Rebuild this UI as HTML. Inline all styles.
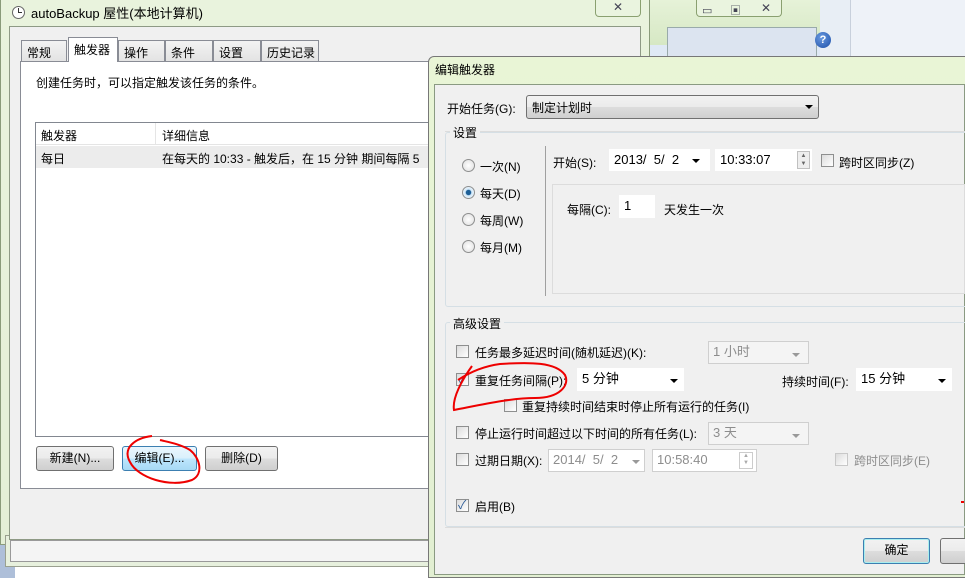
<!DOCTYPE html>
<html><head><meta charset="utf-8"><style>
*{box-sizing:border-box;margin:0;padding:0}
body{width:965px;height:578px;overflow:hidden;position:relative;background:#fff;font-family:"Liberation Sans","Noto Sans CJK SC",sans-serif;font-size:12px;color:#000}
.a{position:absolute;white-space:nowrap}
.btn{position:absolute;border:1px solid #707070;border-radius:3px;background:linear-gradient(#f2f2f2,#ebebeb 50%,#dddddd 51%,#cfcfcf);text-align:center;line-height:22px}
.cb{position:absolute;width:13px;height:13px;border:1px solid #8e8f8f;background:linear-gradient(135deg,#dcdcdc,#fff)}
.rd{position:absolute;width:13px;height:13px;border:1px solid #8e8f8f;border-radius:50%;background:radial-gradient(#fff,#ddd)}
.in{position:absolute;background:#fff;border:1px solid #abadb3;padding-left:4px;line-height:20px;font-size:13px;white-space:nowrap}
.dis{background:#f4f4f4;border-color:#cfcfcf;color:#8d8d8d}
.grp{position:absolute;border:1px solid #d5dfe5;border-radius:3px}
.arr{position:absolute;width:0;height:0;border-left:4px solid transparent;border-right:4px solid transparent;border-top:4px solid #000}
.g{color:#8d8d8d}
.tab{position:absolute;top:40px;height:22px;background:linear-gradient(#f3f3f3,#e3e3e3);border:1px solid #898c95;padding:3px 0 0 5px;font-size:12px;white-space:nowrap;overflow:hidden}
</style></head><body>
<div class="a" style="left:640px;top:0;width:325px;height:56px;background:#dfe9f5"></div>
<div class="a" style="left:650px;top:0;width:320px;height:45px;background:linear-gradient(#e6f2d8,#d6e8c4)"></div>
<div class="a" style="left:667px;top:27px;width:150px;height:30px;background:#dce4f0;border:1px solid #9aa"></div>
<div class="a" style="left:820px;top:0;width:30px;height:56px;background:#e8eef5"></div>
<div class="a" style="left:850px;top:0;width:115px;height:56px;background:#eef2f8;border-left:1px solid #c8d0dc"></div>
<div class="a" style="left:815px;top:32px;width:16px;height:16px;border-radius:50%;background:radial-gradient(circle at 40% 35%,#6a9ae0,#1c4fa8);color:#fff;font-weight:bold;font-size:11px;text-align:center;line-height:16px">?</div>
<div class="a" style="left:696px;top:0;width:86px;height:17px;border:1px solid #8aa070;border-top:none;border-radius:0 0 4px 4px;background:#eaf4df"></div>
<div class="a" style="left:702px;top:4px;font-size:11px;color:#445">▭</div>
<div class="a" style="left:730px;top:2px;font-size:11px;color:#445">▣</div>
<div class="a" style="left:761px;top:1px;font-size:12px;color:#445">✕</div>
<div class="a" style="left:0;top:540px;width:15px;height:38px;background:#aebfd9"></div>
<div class="a" style="left:0;top:0;width:650px;height:545px;background:linear-gradient(#e9f3dd,#e4efd6);border:1px solid #8a9b7a;border-top:none"></div>
<div class="a" style="left:5px;top:535px;width:640px;height:32px;background:#e7f0dd;border:1px solid #9aa08f"></div>
<div class="a" style="left:10px;top:540px;width:630px;height:22px;background:#f4f4f4;border:1px solid #999"></div>
<div class="a" style="left:595px;top:0;width:46px;height:17px;border:1px solid #8aa070;border-top:none;border-radius:0 0 4px 4px;background:#eaf4df;text-align:center;font-size:12px;color:#445">✕</div>
<div class="a" style="left:12px;top:6px;width:13px;height:13px;border:1px solid #666;border-radius:50%;background:#fff"></div>
<div class="a" style="left:18px;top:8px;width:1px;height:5px;background:#333"></div>
<div class="a" style="left:18px;top:12px;width:4px;height:1px;background:#333"></div>
<div class="a" style="left:31px;top:3px;font-size:13px">autoBackup 屋性(本地计算机)</div>
<div class="a" style="left:9px;top:26px;width:632px;height:514px;background:#f0f0f0;border:1px solid #8e9a85"></div>
<div class="a" style="left:20px;top:61px;width:620px;height:428px;background:#fff;border:1px solid #898c95"></div>
<div class="tab" style="left:21px;width:46px">常规</div>
<div class="a" style="left:68px;top:37px;width:50px;height:25px;background:#fff;border:1px solid #898c95;border-bottom:none;padding:3px 0 0 5px;font-size:12px">触发器</div>
<div class="tab" style="left:118px;width:47px">操作</div>
<div class="tab" style="left:165px;width:48px">条件</div>
<div class="tab" style="left:213px;width:48px">设置</div>
<div class="tab" style="left:261px;width:58px">历史记录</div>
<div class="a" style="left:36px;top:74px;font-size:12px">创建任务时，可以指定触发该任务的条件。</div>
<div class="a" style="left:35px;top:122px;width:400px;height:315px;border:1px solid #828790;background:#fff"></div>
<div class="a" style="left:36px;top:123px;width:400px;height:22px;border-bottom:1px solid #e5e5e5"></div>
<div class="a" style="left:155px;top:123px;width:1px;height:22px;background:#e5e5e5"></div>
<div class="a" style="left:41px;top:127px">触发器</div>
<div class="a" style="left:162px;top:127px">详细信息</div>
<div class="a" style="left:36px;top:146px;width:400px;height:22px;background:#ececec"></div>
<div class="a" style="left:41px;top:150px">每日</div>
<div class="a" style="left:162px;top:150px">在每天的 10:33 - 触发后，在 15 分钟 期间每隔 5</div>
<div class="btn" style="left:36px;top:446px;width:78px;height:25px">新建(N)...</div>
<div class="btn" style="left:122px;top:446px;width:75px;height:25px;border-color:#3c7fb1;background:linear-gradient(#eaf6fd,#d9f0fc 50%,#bee6fd 51%,#a7d9f5)">编辑(E)...</div>
<div class="btn" style="left:205px;top:446px;width:73px;height:25px">删除(D)</div>
<div class="a" style="left:428px;top:56px;width:540px;height:522px;background:linear-gradient(#e9f5d6,#e2efd2);border:1px solid #777;border-radius:6px 0 0 0"></div>
<div class="a" style="left:435px;top:61px;font-size:12px">编辑触发器</div>
<div class="a" style="left:434px;top:84px;width:531px;height:491px;background:#f0f0f0;border:1px solid #8a9a82"></div>
<div class="a" style="left:447px;top:100px">开始任务(G):</div>
<div class="a" style="left:526px;top:95px;width:293px;height:24px;border:1px solid #707070;border-radius:3px;background:linear-gradient(#f2f2f2,#ebebeb 50%,#ddd 51%,#cfcfcf);padding:3px 0 0 5px">制定计划时</div>
<div class="arr" style="left:805px;top:105px"></div>
<div class="a" style="left:445px;top:131px;width:520px;height:1px;background:#dcdcdc"></div>
<div class="grp" style="left:445px;top:132px;width:525px;height:175px"></div>
<div class="a" style="left:450px;top:124px;background:#f0f0f0;padding:0 3px">设置</div>
<div class="rd" style="left:462px;top:159px"></div><div class="a" style="left:480px;top:158px">一次(N)</div>
<div class="rd" style="left:462px;top:186px;background:radial-gradient(#1c5e96 30%,#cfe6f7 40%,#fff)"></div><div class="a" style="left:480px;top:185px">每天(D)</div>
<div class="rd" style="left:462px;top:213px"></div><div class="a" style="left:480px;top:212px">每周(W)</div>
<div class="rd" style="left:462px;top:240px"></div><div class="a" style="left:480px;top:239px">每月(M)</div>
<div class="a" style="left:545px;top:146px;width:1px;height:150px;background:#a0a0a0"></div>
<div class="a" style="left:553px;top:154px">开始(S):</div>
<div class="in" style="left:609px;top:149px;width:101px;height:22px;border-color:#fff">2013/&nbsp; 5/&nbsp; 2</div>
<div class="arr" style="left:692px;top:159px"></div>
<div class="in" style="left:715px;top:149px;width:97px;height:22px;border-color:#fff">10:33:07</div>
<div class="a" style="left:797px;top:151px;width:13px;height:18px;border:1px solid #c0c0c0;background:#eee;font-size:6px;text-align:center;line-height:8px;color:#666;white-space:normal">▲<br>▼</div>
<div class="cb" style="left:821px;top:154px"></div><div class="a" style="left:839px;top:154px">跨时区同步(Z)</div>
<div class="a" style="left:552px;top:184px;width:413px;height:110px;border:1px solid #dcdcdc"></div>
<div class="a" style="left:567px;top:201px">每隔(C):</div>
<div class="in" style="left:619px;top:195px;width:36px;height:23px;border-color:#fff">1</div>
<div class="a" style="left:664px;top:201px">天发生一次</div>
<div class="grp" style="left:445px;top:322px;width:525px;height:205px"></div>
<div class="a" style="left:450px;top:315px;background:#f0f0f0;padding:0 3px">高级设置</div>
<div class="cb" style="left:456px;top:345px"></div><div class="a" style="left:475px;top:344px">任务最多延迟时间(随机延迟)(K):</div>
<div class="in dis" style="left:708px;top:341px;width:101px;height:23px">1 小时</div><div class="arr" style="left:792px;top:353px;border-top-color:#999"></div>
<div class="cb" style="left:456px;top:373px"></div><div class="a" style="left:458px;top:370px;color:#2a5a96">✓</div><div class="a" style="left:475px;top:372px">重复任务间隔(P):</div>
<div class="in" style="left:577px;top:368px;width:107px;height:23px;border-color:#fff">5 分钟</div><div class="arr" style="left:670px;top:379px"></div>
<div class="a" style="left:782px;top:373px">持续时间(F):</div>
<div class="in" style="left:856px;top:368px;width:96px;height:23px;border-color:#fff">15 分钟</div><div class="arr" style="left:938px;top:379px"></div>
<div class="cb" style="left:504px;top:399px"></div><div class="a" style="left:522px;top:398px">重复持续时间结束时停止所有运行的任务(I)</div>
<div class="cb" style="left:456px;top:426px"></div><div class="a" style="left:475px;top:425px">停止运行时间超过以下时间的所有任务(L):</div>
<div class="in dis" style="left:708px;top:422px;width:101px;height:23px">3 天</div><div class="arr" style="left:792px;top:434px;border-top-color:#999"></div>
<div class="cb" style="left:456px;top:453px"></div><div class="a" style="left:475px;top:452px">过期日期(X):</div>
<div class="in dis" style="left:548px;top:449px;width:97px;height:23px;background:#fff">2014/&nbsp; 5/&nbsp; 2</div><div class="arr" style="left:632px;top:460px;border-top-color:#999"></div>
<div class="in dis" style="left:652px;top:449px;width:105px;height:23px;background:#fff">10:58:40</div>
<div class="a" style="left:739px;top:452px;width:14px;height:17px;border:1px solid #ccc;font-size:6px;text-align:center;line-height:7px;color:#aaa;white-space:normal">▲<br>▼</div>
<div class="cb" style="left:835px;top:453px;border-color:#c8c8c8"></div><div class="a g" style="left:854px;top:452px">跨时区同步(E)</div>
<div class="cb" style="left:456px;top:499px"></div><div class="a" style="left:458px;top:496px;color:#2a5a96">✓</div><div class="a" style="left:475px;top:498px">启用(B)</div>
<div class="a" style="left:445px;top:527px;width:520px;height:1px;background:#dcdcdc"></div>
<div class="btn" style="left:863px;top:538px;width:67px;height:26px;border-color:#3c7fb1;box-shadow:inset 0 0 0 1px #aee">确定</div>
<div class="btn" style="left:940px;top:538px;width:30px;height:26px"></div>
<svg class="a" style="left:0;top:0" width="965" height="578">
<g fill="none" stroke="#e00" stroke-width="2">
<path d="M152 436 C135 438 122 448 130 462 C138 478 170 488 192 480 C204 474 200 458 190 450 C180 444 168 442 160 440"/>
<path d="M472 366 C462 380 452 398 454 410 C480 405 510 398 535 398 C560 398 570 385 565 375 C556 362 530 362 500 364 C485 366 470 372 458 380"/>
</g>
<rect x="961" y="501" width="3" height="2" fill="#e00"/>
</svg>
</body></html>
